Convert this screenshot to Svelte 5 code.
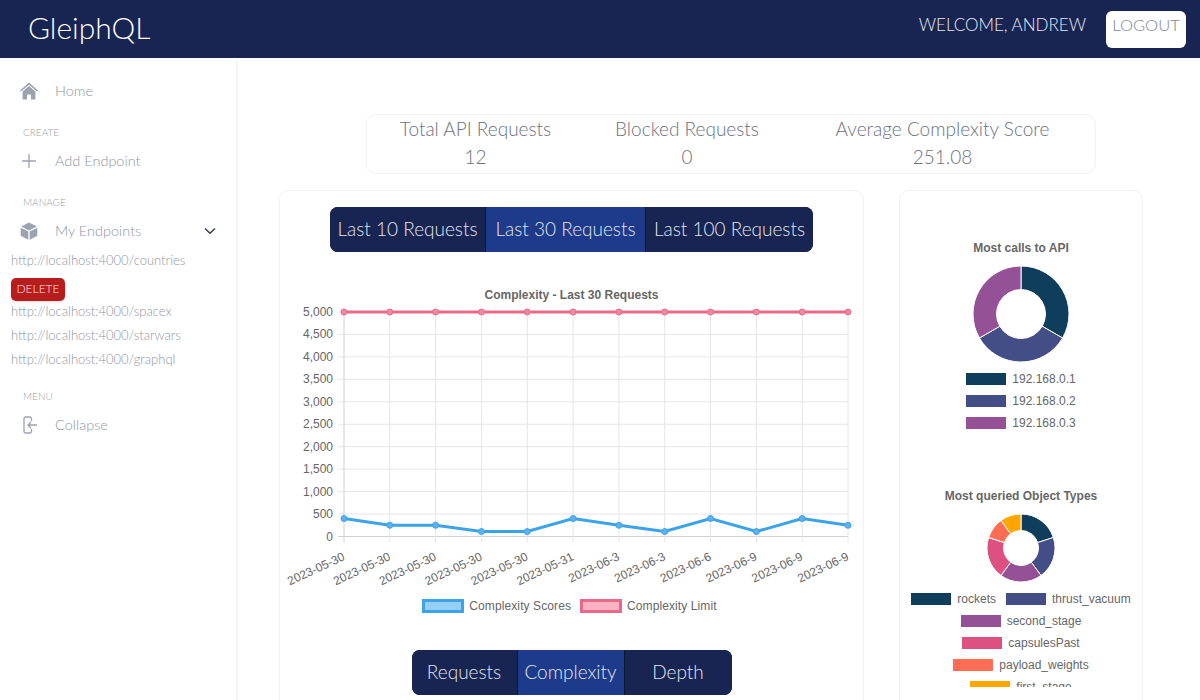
<script>
  const endpoints = ['spacex', 'starwars', 'graphql'];
  const stats = [
    { label: 'Total API Requests', value: '12' },
    { label: 'Blocked Requests', value: '0' },
    { label: 'Average Complexity Score', value: '251.08' }
  ];
  const ranges = ['Last 10 Requests', 'Last 30 Requests', 'Last 100 Requests'];
  const metrics = ['Requests', 'Complexity', 'Depth'];

  const dates = ['2023-05-30', '2023-05-30', '2023-05-30', '2023-05-30', '2023-05-30', '2023-05-31',
    '2023-06-3', '2023-06-3', '2023-06-6', '2023-06-9', '2023-06-9', '2023-06-9'];
  const scores = [400, 250, 250, 110, 110, 400, 250, 110, 400, 110, 400, 250];
  const ticks = [5000, 4500, 4000, 3500, 3000, 2500, 2000, 1500, 1000, 500, 0];

  // plot area inside the svg
  const left = 53, right = 557, top = 28, bottom = 252.5;
  const px = (i) => left + (i * (right - left)) / (dates.length - 1);
  const py = (v) => bottom - (v * (bottom - top)) / 5000;
  const line = (vals) => vals.map((v, i) => `${px(i)},${py(v)}`).join(' ');

  const palette = ['#0f3d5c', '#444e86', '#955196', '#dd5182', '#ff6e54', '#ffa600'];
  const calls = [
    { name: '192.168.0.1', value: 1 },
    { name: '192.168.0.2', value: 1 },
    { name: '192.168.0.3', value: 1 }
  ];
  const types = [
    { name: 'rockets', value: 2 },
    { name: 'thrust_vacuum', value: 2 },
    { name: 'second_stage', value: 2 },
    { name: 'capsulesPast', value: 2 },
    { name: 'payload_weights', value: 1 },
    { name: 'first_stage', value: 1 }
  ];

  function slices(data, R, r) {
    const total = data.reduce((s, d) => s + d.value, 0);
    let a = 0;
    const pt = (rad, ang) => `${(rad * Math.sin(ang)).toFixed(2)} ${(-rad * Math.cos(ang)).toFixed(2)}`;
    return data.map((d) => {
      const start = a;
      a += (d.value / total) * Math.PI * 2;
      const big = a - start > Math.PI ? 1 : 0;
      return `M${pt(R, start)}A${R} ${R} 0 ${big} 1 ${pt(R, a)}L${pt(r, a)}A${r} ${r} 0 ${big} 0 ${pt(r, start)}Z`;
    });
  }
</script>

<div class="page">
  <header class="topbar">
    <div class="logo">GleiphQL</div>
    <div class="account">
      <span class="welcome">WELCOME, ANDREW</span>
      <button class="logout">LOGOUT</button>
    </div>
  </header>

  <div class="body">
    <aside class="sidebar">
      <div class="item">
        <svg viewBox="0 0 18 18" class="icon"><path d="M9 .6 0 8.4l1 1.1L9 2.7l8 6.8 1-1.1z" /><path d="M9 4 2.6 9.4V17.4H7v-5h4v5h4.400V9.400z" /></svg>
        <span>Home</span>
      </div>
      <div class="heading">CREATE</div>
      <div class="item">
        <svg viewBox="0 0 18 18" class="icon"><path d="M9 2v14M2 9h14" class="thin" /></svg>
        <span>Add Endpoint</span>
      </div>
      <div class="heading">MANAGE</div>
      <div class="item">
        <svg viewBox="0 0 18 18" class="icon"><path d="M9 .5 1.200 4.500 9 8.400l7.800-3.900z" /><path d="M.7 5.800v8L8.300 17.700V9.600z" /><path d="M17.300 5.800v8L9.700 17.700V9.600z" /></svg>
        <span>My Endpoints</span>
        <svg viewBox="0 0 12 8" class="chevron"><path d="M1 1.500 6 6.300l5-4.800" /></svg>
      </div>
      <div class="endpoints">
        <div class="link">http://localhost:4000/countries</div>
        <button class="delete">DELETE</button>
        {#each endpoints as name}
          <div class="link">http://localhost:4000/{name}</div>
        {/each}
      </div>
      <div class="heading menu">MENU</div>
      <div class="item">
        <svg viewBox="0 0 18 18" class="icon"><path d="M11.500 5V2.500a1.500 1.500 0 0 0-1.500-1.500H5.500A1.500 1.500 0 0 0 4 2.500v13A1.500 1.500 0 0 0 5.500 17H10a1.500 1.500 0 0 0 1.500-1.500V13M17 9H8m3-3-3 3 3 3" class="thin" /></svg>
        <span>Collapse</span>
      </div>
    </aside>

    <main class="main">
      <section class="stats">
        {#each stats as s}
          <div class="stat">
            <div class="stat-label">{s.label}</div>
            <div class="stat-value">{s.value}</div>
          </div>
        {/each}
      </section>

      <div class="row">
        <section class="card chart-card">
          <div class="tabs ranges">
            {#each ranges as r, i}
              <button class:active={i === 1}>{r}</button>
            {/each}
          </div>

          <svg class="plot" width="560" height="315" viewBox="0 0 560 315">
            <text x="280.500" y="15" class="title" text-anchor="middle">Complexity - Last 30 Requests</text>
            {#each ticks as t}
              <line x1="47" x2={right} y1={py(t)} y2={py(t)} class={t === 0 ? 'axis' : 'grid'} />
              <text x="42" y={py(t) + 4} class="tick" text-anchor="end">{t.toLocaleString('en-US')}</text>
            {/each}
            {#each dates as d, i}
              <line x1={px(i)} x2={px(i)} y1={top} y2={bottom + 6} class={i === 0 ? 'axis' : 'grid'} />
              <text class="tick" text-anchor="end" transform="translate({px(i) + 1.500} {bottom + 23}) rotate(-25)">{d}</text>
            {/each}

            <polyline points={line(dates.map(() => 5000))} class="limit" />
            {#each dates as _, i}
              <circle cx={px(i)} cy={py(5000)} r="3" class="limit-dot" />
            {/each}
            <polyline points={line(scores)} class="score" />
            {#each scores as v, i}
              <circle cx={px(i)} cy={py(v)} r="3" class="score-dot" />
            {/each}
          </svg>

          <div class="chart-legend">
            <span class="swatch blue"></span><span class="legend-text">Complexity Scores</span>
            <span class="swatch pink"></span><span class="legend-text">Complexity Limit</span>
          </div>

          <div class="tabs metrics">
            {#each metrics as m, i}
              <button class:active={i === 1}>{m}</button>
            {/each}
          </div>
        </section>

        <section class="card side-card">
          <div class="donut first">
            <div class="title-html">Most calls to API</div>
            <svg width="98" height="98" viewBox="-49 -49 98 98">
              {#each slices(calls, 48, 24.500) as d, i}
                <path {d} fill={palette[i]} class="slice" />
              {/each}
            </svg>
            <div class="legend column">
              {#each calls as c, i}
                <div class="entry"><span class="box" style="background: {palette[i]}"></span>{c.name}</div>
              {/each}
            </div>
          </div>

          <div class="donut second">
            <div class="title-html">Most queried Object Types</div>
            <svg width="70" height="70" viewBox="-35 -35 70 70">
              {#each slices(types, 34, 17.500) as d, i}
                <path {d} fill={palette[i]} class="slice" />
              {/each}
            </svg>
            <div class="legend wrap">
              {#each types as t, i}
                <div class="entry"><span class="box" style="background: {palette[i]}"></span>{t.name}</div>
              {/each}
            </div>
          </div>
        </section>
      </div>
    </main>
  </div>
</div>

<style>
  :global(body) {
    margin: 0;
    background: #fff;
  }

  .page {
    height: 700px;
    overflow: hidden;
    display: flex;
    flex-direction: column;
    font-family: Lato, "Open Sans", sans-serif;
    font-weight: 300;
  }

  button {
    font-family: inherit;
    font-weight: inherit;
    cursor: pointer;
  }

  .topbar {
    flex: none;
    height: 58px;
    background: #182452;
    color: #fff;
    display: flex;
    align-items: center;
    justify-content: space-between;
    padding: 0 14px 4px 28px;
    box-sizing: border-box;
  }

  .logo {
    font-size: 30px;
  }

  .account {
    display: flex;
    align-items: center;
    gap: 20px;
    padding-top: 4px;
  }

  .welcome {
    font-size: 17px;
    color: #e8ebf3;
    margin-bottom: 10px;
  }

  .logout {
    width: 80px;
    height: 37px;
    background: #fff;
    color: #7f8699;
    font-size: 16.500px;
    border: none;
    border-radius: 6px;
    padding: 0 0 9px;
  }

  .body {
    flex: 1;
    display: flex;
    min-height: 0;
  }

  .sidebar {
    flex: none;
    width: 238px;
    box-sizing: border-box;
    border-right: 2px solid #f3f4f6;
    padding-top: 13px;
    margin-top: 3px;
    color: #8f96a3;
  }

  .item {
    height: 40px;
    display: flex;
    align-items: center;
    padding-left: 20px;
    font-size: 14.500px;
  }

  .item span {
    padding-bottom: 2px;
  }

  .item:first-child {
    margin-top: -3px;
  }

  .icon {
    width: 18px;
    height: 18px;
    margin-right: 17px;
    fill: #9ca3af;
  }

  .thin {
    fill: none;
    stroke: #9ca3af;
    stroke-width: 1.300;
  }

  .chevron {
    width: 12px;
    height: 8px;
    margin-left: auto;
    margin-right: 20px;
    fill: none;
    stroke: #374151;
    stroke-width: 1.500;
  }

  .heading {
    font-size: 10px;
    line-height: 14px;
    color: #9a9fa8;
    padding-left: 23px;
    margin-top: 14px;
    margin-bottom: 2px;
  }

  .heading.menu {
    margin-top: 20px;
  }

  .endpoints {
    margin-top: -1px;
    padding-left: 11px;
  }

  .link {
    font-size: 13px;
    line-height: 20px;
    margin-bottom: 4px;
    color: #8f96a3;
    white-space: nowrap;
  }

  .delete {
    display: block;
    width: 54px;
    height: 23px;
    margin-top: 8px;
    padding: 0 0 2px;
    background: #b91c1c;
    color: #fde8e8;
    font-size: 12px;
    border: none;
    border-radius: 5px;
    box-shadow: 0 1px 3px rgba(0, 0, 0, 0.15);
  }

  .main {
    flex: 1;
    min-width: 0;
    padding-top: 56px;
  }

  .stats {
    margin-left: 128px;
    width: 730px;
    height: 60px;
    box-sizing: border-box;
    border: 1px solid #f1f2f4;
    border-radius: 10px;
    padding-bottom: 2px;
    display: grid;
    grid-template-columns: 217px 206px 1fr;
    align-items: center;
    text-align: center;
    color: #6b7280;
  }

  .stat-label {
    font-size: 19px;
    line-height: 28px;
  }

  .stat-value {
    font-size: 19px;
    line-height: 28px;
  }

  .row {
    display: flex;
    align-items: flex-start;
    gap: 35px;
    margin-top: 16px;
    margin-left: 41px;
  }

  .card {
    box-sizing: border-box;
    border: 1px solid #f1f2f4;
    border-radius: 10px;
    height: 600px;
  }

  .chart-card {
    flex: none;
    width: 585px;
    display: flex;
    flex-direction: column;
    align-items: center;
    padding-top: 16px;
  }

  .tabs {
    display: flex;
    border-radius: 8px;
    overflow: hidden;
    background: #0f172a;
    gap: 1px;
  }

  .tabs button {
    border: none;
    padding: 0 0 2px;
    background: #182452;
    color: #e2e6f0;
    font-size: 19px;
  }

  .tabs button.active {
    background: #1e3a8a;
  }

  .ranges {
    height: 45px;
  }

  .ranges button:nth-child(1) {
    width: 155px;
  }

  .ranges button:nth-child(2) {
    width: 159px;
  }

  .ranges button:nth-child(3) {
    width: 167px;
  }

  .metrics {
    height: 45px;
    margin-top: 37px;
  }

  .metrics button:nth-child(1) {
    width: 105px;
  }

  .metrics button:nth-child(2) {
    width: 106px;
  }

  .metrics button:nth-child(3) {
    width: 107px;
  }

  .plot {
    display: block;
    margin-top: 32px;
    margin-left: -1px;
    overflow: visible;
    font-family: "Liberation Sans", Arial, sans-serif;
  }

  .title {
    font-size: 12px;
    font-weight: 700;
    fill: #666;
  }

  .tick {
    font-size: 12px;
    fill: #666;
  }

  .grid {
    stroke: #e6e6e6;
    stroke-width: 1;
  }

  .axis {
    stroke: #d0d0d0;
    stroke-width: 1;
  }

  .limit {
    fill: none;
    stroke: #e96a88;
    stroke-width: 3;
  }

  .limit-dot {
    fill: #f08aa2;
    stroke: #e96a88;
    stroke-width: 1;
  }

  .score {
    fill: none;
    stroke: #3ca3e8;
    stroke-width: 3;
  }

  .score-dot {
    fill: #5cb2ec;
    stroke: #3ca3e8;
    stroke-width: 1;
  }

  .chart-legend {
    display: flex;
    align-items: center;
    height: 14px;
    padding-left: 5px;
    font-family: "Liberation Sans", Arial, sans-serif;
    font-weight: 400;
    font-size: 12px;
    letter-spacing: 0.1px;
    color: #666;
  }

  .swatch {
    width: 42px;
    height: 14px;
    box-sizing: border-box;
    border: 3px solid;
    margin-right: 5px;
  }

  .swatch.blue {
    border-color: #3ca3e8;
    background: #96cff5;
  }

  .swatch.pink {
    border-color: #e96a88;
    background: #fdb2c3;
  }

  .legend-text {
    margin-right: 9px;
  }

  .side-card {
    flex: none;
    width: 244px;
    font-family: "Liberation Sans", Arial, sans-serif;
    font-weight: 400;
    color: #666;
  }

  .donut {
    display: flex;
    flex-direction: column;
    align-items: center;
  }

  .donut.first {
    padding-top: 50px;
  }

  .donut.second {
    margin-top: 59px;
  }

  .title-html {
    font-size: 12px;
    font-weight: 700;
    line-height: 14px;
    margin-bottom: 10px;
  }

  .donut svg {
    display: block;
  }

  .slice {
    stroke: #fff;
    stroke-width: 1;
  }

  .legend {
    font-size: 12px;
    line-height: 14px;
    display: flex;
    margin-top: 9px;
  }

  .legend.column {
    flex-direction: column;
    gap: 8px;
  }

  .legend.wrap {
    flex-wrap: wrap;
    justify-content: center;
    gap: 8px 10px;
    width: 228px;
    height: 95px;
    overflow: hidden;
  }

  .entry {
    display: flex;
    align-items: center;
    white-space: nowrap;
  }

  .box {
    width: 40px;
    height: 12px;
    margin-right: 6px;
  }
</style>
